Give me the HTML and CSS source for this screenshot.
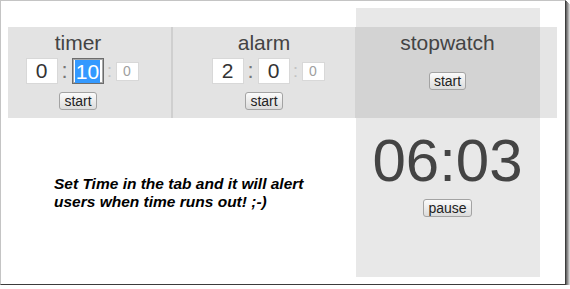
FILE: index.html
```html
<!DOCTYPE html>
<html>
<head>
<meta charset="utf-8">
<link rel="stylesheet" href="styles.css">
</head>
<body>
<div class="frame">
  <div class="panel"></div>
  <div class="tab tab-timer">
    <div class="title">timer</div>
    <div class="fields">
      <span class="box">0</span><span class="colon">:</span><span class="box focus"><span class="sel">10</span></span><span class="colon light">:</span><span class="box small">0</span>
    </div>
    <button class="btn">start</button>
  </div>
  <div class="tab tab-alarm">
    <div class="title">alarm</div>
    <div class="fields">
      <span class="box">2</span><span class="colon">:</span><span class="box">0</span><span class="colon light">:</span><span class="box small">0</span>
    </div>
    <button class="btn">start</button>
  </div>
  <div class="tab tab-stopwatch">
    <div class="title">stopwatch</div>
    <button class="btn btn-sw">start</button>
  </div>
  <div class="bar-end"></div>
  <p class="note">Set Time in the tab and it will alert<br>users when time runs out! ;-)</p>
  <div class="clock">
    <div class="time">06:03</div>
    <button class="btn">pause</button>
  </div>
</div>
</body>
</html>
```
FILE: styles.css
```css
html, body {
  margin: 0;
  padding: 0;
  background: #ffffff;
}
.frame {
  width: 564px;
  height: 283px;
  border-left: 1px solid #c4c4c4;
  border-top: 1px solid #c4c4c4;
  border-right: 1px solid #3c3c3c;
  border-bottom: 1px solid #3c3c3c;
  box-shadow: 1px 1px 0 #6a6a6a, 2px 2px 0 #8c8c8c, 3px 3px 0 #b0b0b0, 4px 4px 0 #d4d4d4;
  background: #ffffff;
  display: grid;
  grid-template-columns: 7px 165px 182px 185px 17px 1fr;
  grid-template-rows: 7px 19px 91px 159px 1fr;
  font-family: "Liberation Sans", Arial, sans-serif;
  color: #444;
}
.panel {
  grid-column: 4;
  grid-row: 2 / 5;
  background: #e8e8e8;
  margin-left: 1px;
}
.tab {
  grid-row: 3;
  display: flex;
  flex-direction: column;
  align-items: center;
  padding-top: 4px;
  box-sizing: border-box;
  background: #e3e3e3;
}
.tab-timer {
  grid-column: 2;
  padding-right: 23px;
  border-right: 2px solid #cfcfcf;
}
.tab-alarm {
  grid-column: 3;
}
.tab-stopwatch {
  grid-column: 4;
  background: #d3d3d3;
}
.bar-end {
  grid-column: 5;
  grid-row: 3;
  background: #e5e5e5;
}
.title {
  font-size: 21px;
  line-height: 24px;
  color: #444;
}
.fields {
  display: flex;
  align-items: center;
  margin-top: 3px;
  margin-left: 8px;
}
.box {
  width: 32px;
  height: 26px;
  box-sizing: border-box;
  border: 1px solid #d8d8d8;
  background: #ffffff;
  display: flex;
  align-items: center;
  justify-content: center;
  font-size: 21px;
  line-height: 24px;
  color: #333;
}
.box.focus {
  border: 1px solid #6c6c6c;
  box-shadow: inset 0 0 0 1px #a8a8a8;
  align-items: flex-start;
  padding-top: 1px;
}
.sel {
  background: #3399ff;
  color: #ffffff;
  line-height: 23px;
  padding: 0 1px;
}
.box.small {
  width: 23px;
  height: 19px;
  font-size: 14px;
  line-height: 16px;
  color: #a0a0a0;
}
.colon {
  width: 14px;
  text-align: center;
  font-size: 22px;
  line-height: 24px;
  color: #777;
}
.colon.light {
  width: 12px;
  font-size: 18px;
  color: #c2c2c2;
}
.btn {
  display: block;
  height: 18px;
  padding: 0 4px;
  margin: 8px 0 0;
  font-family: "Liberation Sans", Arial, sans-serif;
  font-size: 14px;
  line-height: 16px;
  color: #222;
  border: 1px solid #a3a3a3;
  border-radius: 3px;
  background: linear-gradient(#fbfbfb, #dcdcdc);
}
.btn-sw {
  margin-top: 17px;
}
.note {
  grid-column: 2 / 4;
  grid-row: 4;
  margin: 0;
  padding: 57px 0 0 46px;
  font-size: 15.5px;
  line-height: 17.5px;
  font-weight: bold;
  font-style: italic;
  color: #000;
}
.clock {
  grid-column: 4;
  grid-row: 4;
  display: flex;
  flex-direction: column;
  align-items: center;
  padding-top: 8px;
}
.time {
  font-size: 60px;
  line-height: 69px;
  color: #444;
}
.clock .btn {
  margin-top: 4px;
}
```
